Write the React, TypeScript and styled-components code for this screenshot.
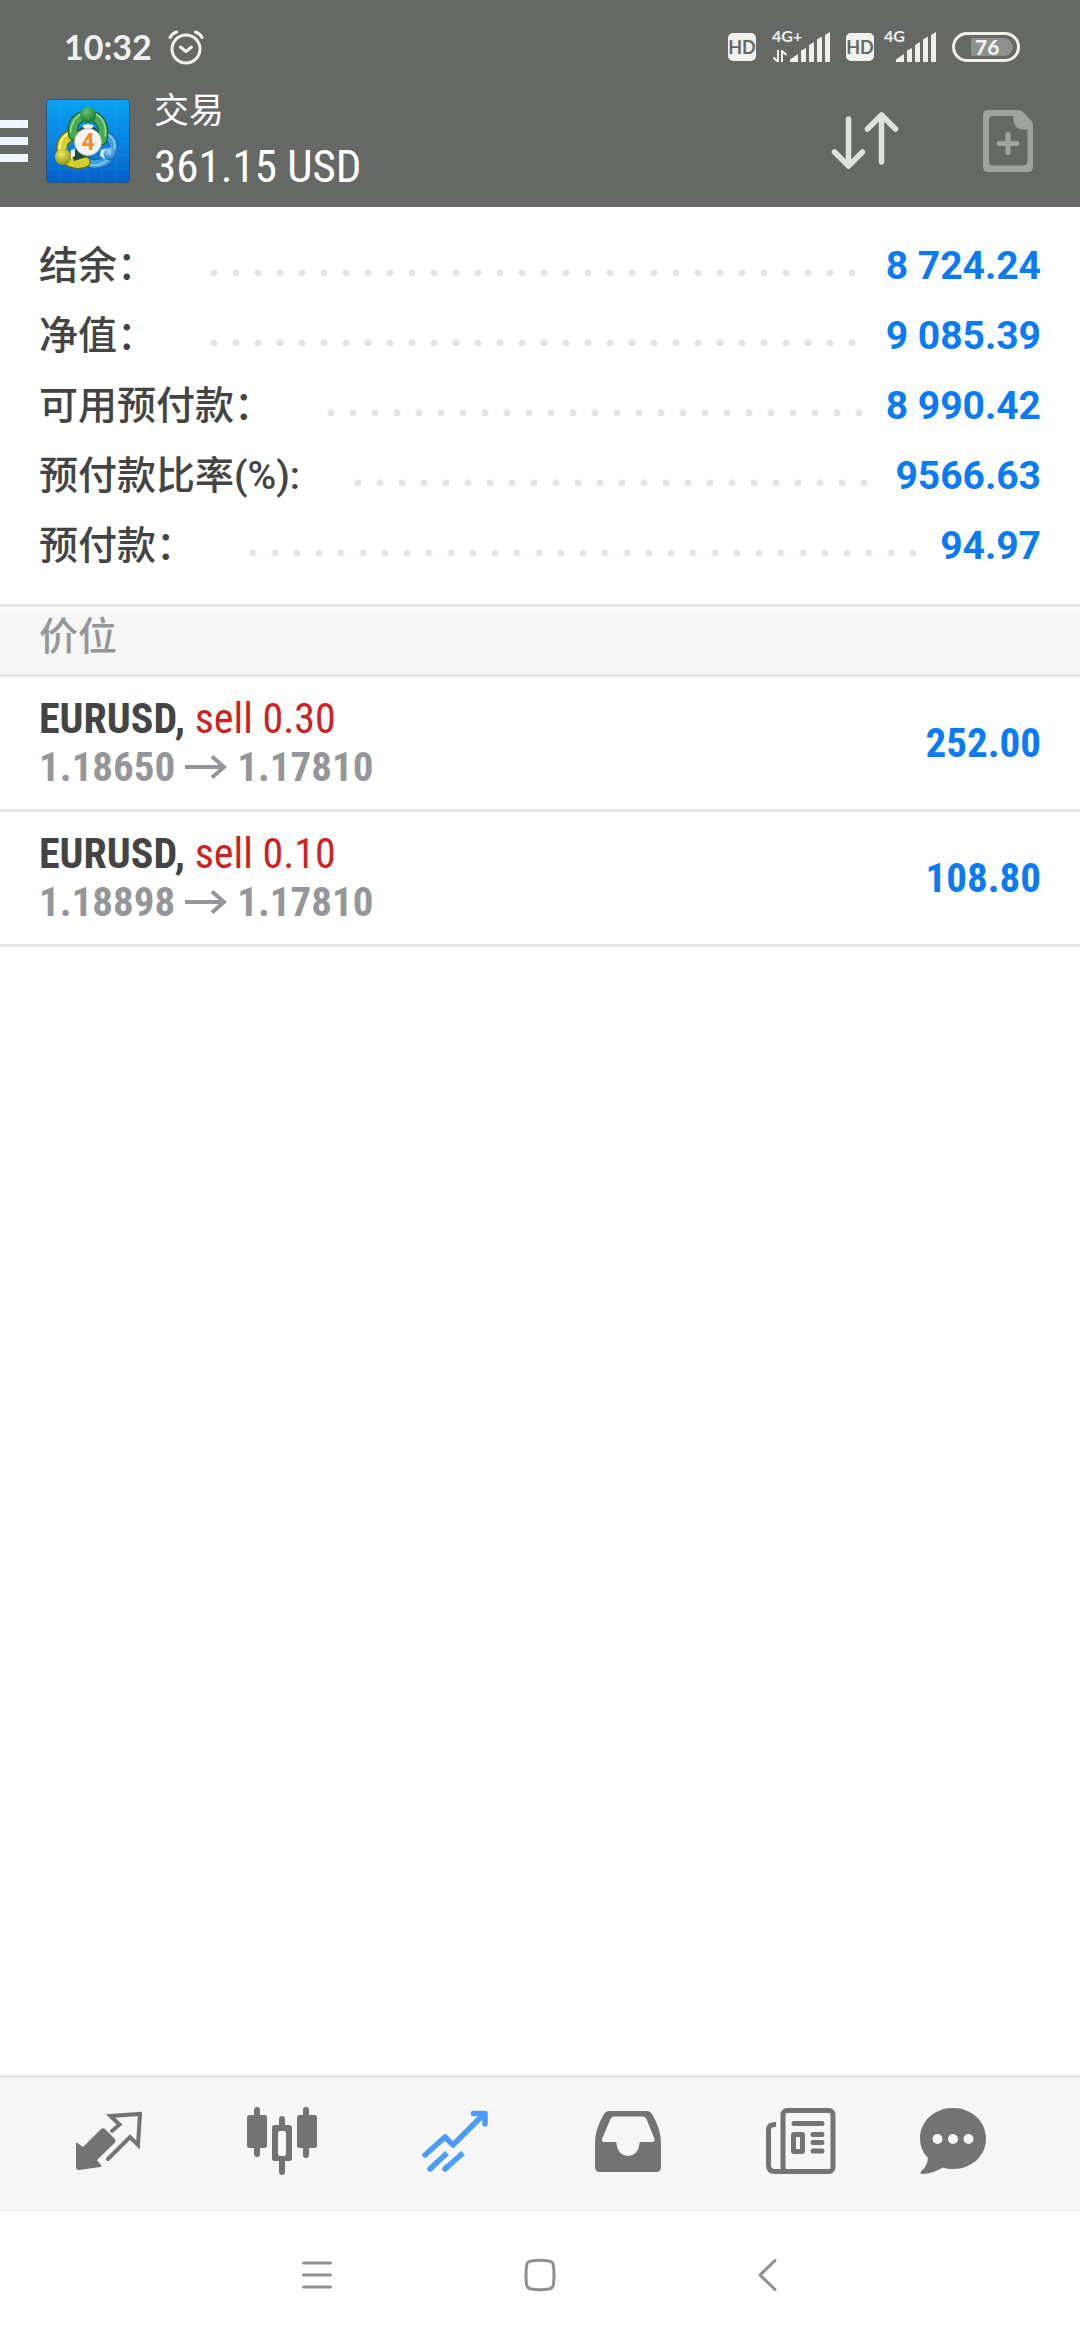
import React from "react";
import styled, { createGlobalStyle } from "styled-components";

const sans = `Roboto, "Noto Sans CJK SC", sans-serif`;
const condensed = `"Roboto Condensed", "Liberation Sans Narrow", Roboto, "Noto Sans CJK SC", sans-serif`;

const color = {
  header: "#666865",
  headerText: "#ffffff",
  status: "#f0f1ef",
  text: "#444444",
  muted: "#959699",
  blue: "#0a7af5",
  red: "#cc2222",
  line: "#e4e4e4",
  panel: "#f6f6f6",
  icon: "#737373",
  active: "#4a9cf8",
  system: "#8f8f8f",
};

const GlobalStyle = createGlobalStyle`
  * { box-sizing: border-box; }
  body { margin: 0; background: #ffffff; font-family: ${sans}; }
  button { border: 0; padding: 0; background: none; font: inherit; color: inherit; cursor: pointer; }
  svg { display: block; }
`;

const Page = styled.div`
  min-height: 100vh;
  display: flex;
  flex-direction: column;
`;

const Header = styled.header`
  background: ${color.header};
  color: ${color.headerText};
`;

const StatusBar = styled.div`
  display: flex;
  align-items: center;
  justify-content: space-between;
  padding: 28px 60px 0 64px;
  color: ${color.status};
`;

const StatusGroup = styled.div<{ $gap: number }>`
  display: flex;
  align-items: center;
  gap: ${(p) => p.$gap}px;
`;

const Clock = styled.time`
  font: 700 34px/38px Lato, sans-serif;
`;

const HdBadge = styled.span`
  width: 28px;
  height: 28px;
  border-radius: 5px;
  background: ${color.status};
  color: ${color.header};
  font: 700 18px/29px Lato, sans-serif;
  text-align: center;
`;

const SignalBox = styled.span<{ $width: number }>`
  position: relative;
  display: flex;
  justify-content: flex-end;
  width: ${(p) => p.$width}px;
`;

const NetworkLabel = styled.span`
  position: absolute;
  top: -4px;
  left: 0;
  font: 700 16px/16px Lato, sans-serif;
`;

const Battery = styled.span`
  display: flex;
  align-items: center;
  width: 68px;
  height: 30px;
  padding: 3px 4px 3px 16px;
  border: 3px solid ${color.status};
  border-radius: 15px;
`;

const BatteryLevel = styled.span`
  flex: 1;
  height: 18px;
  padding-left: 4px;
  border-radius: 2px 9px 9px 2px;
  background: #8e908d;
  font: 900 21px/18px Lato, sans-serif;
`;

const AppBar = styled.div`
  display: flex;
  align-items: center;
  height: 141px;
  padding: 8px 47px 0 0;
`;

const MenuButton = styled.button`
  display: flex;
  flex-direction: column;
  gap: 9px;
  width: 28px;
  margin-right: 18px;
`;

const MenuLine = styled.span`
  height: 8px;
  background: #eef5ff;
`;

const Titles = styled.div`
  flex: 1;
  margin-left: 24px;
  padding-top: 3px;
`;

const Title = styled.h1`
  margin: 0;
  font: 400 35px/44px ${sans};
`;

const Total = styled.p`
  margin: 0;
  padding-top: 5px;
  font: 400 45px/56px ${condensed};
`;

const Actions = styled.div`
  display: flex;
  align-items: center;
  gap: 84px;
`;

const Main = styled.main`
  flex: 1;
`;

const Summary = styled.dl`
  margin: 0;
  padding: 24px 39px 23px;
  border-bottom: 3px solid ${color.line};
`;

const SummaryRow = styled.div`
  display: flex;
  align-items: center;
  height: 70px;
`;

const SummaryLabel = styled.dt`
  color: ${color.text};
  font: 500 39px/58px ${sans};
`;

const Leader = styled.span`
  flex: 1;
  height: 7px;
  margin: 12px 20px 0 54px;
  background: radial-gradient(circle at 4px 4px, ${color.line} 3px, transparent 4px) 0 0 / 22px 7px repeat-x;
`;

const SummaryValue = styled.dd`
  margin: 0;
  color: ${color.blue};
  font: 700 39px/58px ${sans};
`;

const SectionTitle = styled.h2`
  margin: 3px 0 0;
  padding: 0 39px 10px;
  border-bottom: 3px solid ${color.line};
  background: ${color.panel};
  color: ${color.muted};
  font: 500 39px/54px ${sans};
`;

const Positions = styled.ul`
  margin: 0;
  padding: 0;
  list-style: none;
`;

const Position = styled.li`
  display: flex;
  align-items: center;
  justify-content: space-between;
  height: 135px;
  padding: 0 39px;
  border-bottom: 3px solid ${color.line};
  font: 700 41px/48px ${condensed};
`;

const Symbol = styled.div`
  color: ${color.text};
  font-size: 42px;
`;

const Side = styled.span`
  color: ${color.red};
  font-weight: 400;
`;

const Prices = styled.div`
  display: flex;
  align-items: center;
  gap: 10px;
  color: ${color.muted};
`;

const Profit = styled.div`
  color: ${color.blue};
`;

const TabBar = styled.nav`
  display: grid;
  grid-template-columns: repeat(5, 173fr) 132fr;
  height: 136px;
  padding: 0 61px 0 22px;
  border-top: 3px solid ${color.line};
  border-bottom: 1px solid ${color.line};
  background: ${color.panel};
`;

const Tab = styled.button<{ $active?: boolean }>`
  display: flex;
  align-items: center;
  justify-content: center;
  padding-bottom: 6px;
  color: ${(p) => (p.$active ? color.active : color.icon)};
`;

const SystemBar = styled.nav`
  display: flex;
  justify-content: center;
  gap: 190px;
  height: 129px;
  color: ${color.system};
`;

const SystemButton = styled.button`
  width: 34px;
  height: 128px;
`;

const AlarmIcon = () => (
  <svg width="36" height="36" viewBox="0 0 36 36" fill="none" stroke="currentColor" strokeWidth="3" strokeLinecap="round" strokeLinejoin="round">
    <circle cx="18" cy="20" r="14" />
    <path d="M12.5 18 18 22.500 23.500 18" />
    <path d="M2 8.500Q4 4.500 8.500 3M34 8.500Q32 4.500 27.500 3" />
  </svg>
);

const SignalBars = () => (
  <svg width="40" height="30" viewBox="0 0 40 30" fill="currentColor">
    <path d="M0 30V27.500L8 22V30ZM11 18.500 16 16V30H11ZM19 13 24 10V30H19ZM27 7.500 32 4.500V30H27ZM35 3 40 0V30H35Z" />
  </svg>
);

const ArrowsSvg = styled.svg`
  position: absolute;
  left: 1px;
  bottom: 0;
`;

const DataArrows = () => (
  <ArrowsSvg width="14" height="12" viewBox="0 0 14 12" fill="none" stroke="currentColor" strokeWidth="2">
    <path d="M5 0V12L0.500 7.500M9 12V1L13.500 5" />
  </ArrowsSvg>
);

const Signal = ({ label, data }: { label: string; data?: boolean }) => (
  <SignalBox $width={data ? 58 : 52}>
    <NetworkLabel>{label}</NetworkLabel>
    {data && <DataArrows />}
    <SignalBars />
  </SignalBox>
);

const AppLogo = () => (
  <svg width="84" height="84" viewBox="0 0 84 84">
    <defs>
      <linearGradient id="sky" x1="0" y1="0" x2="0" y2="1">
        <stop offset="0" stopColor="#0aa2f2" />
        <stop offset="0.500" stopColor="#0784e2" />
        <stop offset="1" stopColor="#0560c6" />
      </linearGradient>
      <radialGradient id="green" cx="0.400" cy="0.300" r="0.700">
        <stop offset="0" stopColor="#6cc46c" />
        <stop offset="1" stopColor="#137536" />
      </radialGradient>
      <radialGradient id="yellow" cx="0.400" cy="0.300" r="0.700">
        <stop offset="0" stopColor="#eeea5c" />
        <stop offset="1" stopColor="#94960f" />
      </radialGradient>
      <radialGradient id="blue" cx="0.400" cy="0.300" r="0.700">
        <stop offset="0" stopColor="#9adcff" />
        <stop offset="1" stopColor="#0b68bd" />
      </radialGradient>
    </defs>
    <rect x="0.500" y="0.500" width="83" height="83" rx="3" fill="url(#sky)" stroke="#2c5878" />
    <path d="M14 1V83M28 1V83M42 1V83M56 1V83M70 1V83M1 14H83M1 28H83M1 42H83M1 56H83M1 70H83" stroke="#3bb0f5" strokeWidth="1" opacity="0.180" />
    <g fill="none" strokeLinecap="round">
      <path d="M54 36C63 35 69 42 67 51C65 61 55 67 45 64.500C40 62.500 37 60 36 56" stroke="#125e9c" strokeWidth="9.500" />
      <path d="M54 36C63 35 69 42 67 51C65 61 55 67 45 64.500C40 62.500 37 60 36 56" stroke="#3f9fe0" strokeWidth="7.500" />
      <path d="M56 34C65 35 70 42 68 50C66 60 55 68 45 66" stroke="#8fd2f6" strokeWidth="1.500" />
      <path d="M30 36C21 35 15 43 16 52C18 62 29 67 39 63" stroke="#6a6c0b" strokeWidth="11.500" />
      <path d="M30 36C21 35 15 43 16 52C18 62 29 67 39 63" stroke="#d3d030" strokeWidth="9" />
      <path d="M28 33C19 34 13 41 14 50" stroke="#f4f27c" strokeWidth="2" />
      <path d="M27.500 36C25 25 31 16.500 42 16.500C53.500 16.500 60 28 56 41" stroke="#0f552a" strokeWidth="10.500" />
      <path d="M27.500 36C25 25 31 16.500 42 16.500C53.500 16.500 60 28 56 41" stroke="#48aa50" strokeWidth="8.500" />
      <path d="M24.500 33C25 24 30 17 35 15M50 15C57 19 61 28 59 37" stroke="#9bd894" strokeWidth="1.500" />
    </g>
    <path d="M33 31Q42 20 51 31L47 37H36ZM25 53 33 49 40 58 28 62Z" fill="#1d4c3c" />
    <path d="M36 27Q42 23 48 27L44 31H40ZM25 51 29 50V57L24 60Z" fill="#ecf7da" />
    <path d="M55 51 61 49 59 60 54 57Z" fill="#d9f1ff" />
    <circle cx="42" cy="16" r="8" fill="url(#green)" />
    <circle cx="17" cy="58" r="8" fill="url(#yellow)" />
    <circle cx="64" cy="55" r="6.500" fill="url(#blue)" />
    <circle cx="42" cy="43" r="13.500" fill="#f3f3f1" stroke="#b9bfba" strokeWidth="1" />
    <text x="42" y="51" textAnchor="middle" fontFamily="Roboto, sans-serif" fontWeight="700" fontSize="23" fill="#f58a2c">4</text>
  </svg>
);

const SortIcon = () => (
  <svg width="68" height="60" viewBox="0 0 68 60" fill="none" stroke="#e0e2df" strokeWidth="5.500" strokeLinecap="round" strokeLinejoin="round">
    <path d="M17.500 8V55M3.500 41 17.500 55 31.500 41M50.500 51V4M36.500 18 50.500 4 64.500 18" />
  </svg>
);

const NewOrderIcon = () => (
  <svg width="50" height="62" viewBox="0 0 50 62" fill="#a0a29f">
    <path fillRule="evenodd" d="M5 0H36Q38 0 39.500 1.500L48.500 11Q50 12.500 50 15V57Q50 62 45 62H5Q0 62 0 57V5Q0 0 5 0ZM10 6Q6 6 6 10V51Q6 55.500 10 55.500H40Q44.500 55.500 44.500 51V19.500H40Q31 19 30.500 10V6Z" />
    <path d="M25 24.500V42.500M16 33.500H34" stroke="#a0a29f" strokeWidth="5" strokeLinecap="round" />
  </svg>
);

const PriceArrow = () => (
  <svg width="42" height="26" viewBox="0 0 42 26" fill="none" stroke="currentColor" strokeWidth="4">
    <path d="M0 13H39M27 2.500 39 13 27 23.500" />
  </svg>
);

const QuotesIcon = () => (
  <svg width="68" height="60" viewBox="0 0 68 60">
    <path d="M1 33Q1 31 2.500 32L8 36 26 18Q28 16.500 30 18L40 28Q41 30 40 31.500L22 49 26 54Q27 56 25 56L4 59Q1 59 1 56Z" fill="currentColor" />
    <path d="M37 20 44.500 13.500 35.500 5 65 3 63 34 55 26 33 48" fill="none" stroke="currentColor" strokeWidth="4" strokeLinecap="round" />
  </svg>
);

const CandlesIcon = () => (
  <svg width="70" height="68" viewBox="0 0 70 68" fill="currentColor">
    <rect x="7" y="0" width="6" height="50" rx="3" />
    <rect x="0" y="8" width="20" height="33" rx="2.500" />
    <rect x="56" y="0" width="6" height="51" rx="3" />
    <rect x="50" y="8" width="20" height="33" rx="2.500" />
    <rect x="32" y="9" width="6" height="14" rx="3" />
    <rect x="32" y="50" width="6" height="18" rx="3" />
    <path fillRule="evenodd" d="M27.500 18H42.500Q45 18 45 20.500V51.500Q45 54 42.500 54H27.500Q25 54 25 51.500V20.500Q25 18 27.500 18ZM33 24Q31 24 31 26V46Q31 49 33 49H37Q39 49 39 46V26Q39 24 37 24Z" />
  </svg>
);

const TradeIcon = () => (
  <svg width="66" height="62" viewBox="0 0 66 62" fill="none" stroke="currentColor" strokeWidth="5.500" strokeLinejoin="round">
    <path d="M3 45 23 27 31 35 62 4" strokeLinecap="round" />
    <path d="M51.500 3.500H63V14" strokeLinecap="round" />
    <path d="M8 59 25 43M23 59 41 43" />
    <path d="M8 59 10 57M23 59 25 57" strokeLinecap="round" />
  </svg>
);

const InboxIcon = () => (
  <svg width="66" height="61" viewBox="0 0 66 61" fill="currentColor">
    <path fillRule="evenodd" d="M14 0H52Q55 0 57 3Q66 18 66 32V56Q66 61 61 61H5Q0 61 0 56V32Q0 18 9 3Q11 0 14 0ZM19 5.500Q16.500 5.500 15.500 8L7 28Q6.500 31 9 31H21.500V33Q23 44.500 33 45Q43 44.500 44.500 33V31H57Q60 31 59.500 28L51.500 8Q50.500 5.500 48 5.500Z" />
  </svg>
);

const NewsIcon = () => (
  <svg width="70" height="66" viewBox="0 0 70 66" fill="none" stroke="currentColor" strokeWidth="5">
    <rect x="17" y="2.500" width="50" height="61" rx="4" />
    <path d="M10 16.500Q2.500 16 2.500 22V57Q2.500 63.500 9 63.500H20" />
    <path d="M28 15.500H56M47 26.500H56M47 34.500H56M47 43H56" strokeLinecap="round" />
    <rect x="27.500" y="26.500" width="9" height="17" rx="0.500" />
  </svg>
);

const ChatIcon = () => (
  <svg width="66" height="66" viewBox="0 0 66 66" fill="currentColor">
    <path fillRule="evenodd" d="M33 0C52 0 66 13.500 66 30.500C66 47.500 52 61 33 61C29.500 61 26 60.500 23 59.500Q13 65.500 2 66Q0 65.500 1 63.500Q7.500 58 8 50Q0 42 0 30.500C0 13.500 14 0 33 0ZM17.500 26A5 5 0 1 0 17.500 36A5 5 0 1 0 17.500 26ZM33 26A5 5 0 1 0 33 36A5 5 0 1 0 33 26ZM48.500 26A5 5 0 1 0 48.500 36A5 5 0 1 0 48.500 26Z" />
  </svg>
);

const RecentsIcon = () => (
  <svg width="34" height="34" viewBox="0 0 34 34" fill="none" stroke="currentColor" strokeWidth="3" strokeLinecap="round">
    <path d="M4.500 5H31.500M4.500 17H31.500M4.500 29H31.500" />
  </svg>
);

const HomeIcon = () => (
  <svg width="34" height="34" viewBox="0 0 34 34" fill="none" stroke="currentColor" strokeWidth="3">
    <path d="M8 3Q17 1.500 26 3Q30 3.500 30.500 8Q31.500 17 30.500 26Q30 30.500 26 31Q17 32.500 8 31Q4 30.500 3.500 26Q2.500 17 3.500 8Q4 3.500 8 3Z" />
  </svg>
);

const BackIcon = () => (
  <svg width="34" height="34" viewBox="0 0 34 34" fill="none" stroke="currentColor" strokeWidth="3" strokeLinecap="round" strokeLinejoin="round">
    <path d="M28 2.500 13 17 28 31.500" />
  </svg>
);

const summary = [
  { label: "结余：", value: "8 724.24" },
  { label: "净值：", value: "9 085.39" },
  { label: "可用预付款：", value: "8 990.42" },
  { label: "预付款比率(%):", value: "9566.63" },
  { label: "预付款：", value: "94.97" },
];

const positions = [
  { symbol: "EURUSD", side: "sell 0.30", open: "1.18650", current: "1.17810", profit: "252.00" },
  { symbol: "EURUSD", side: "sell 0.10", open: "1.18898", current: "1.17810", profit: "108.80" },
];

const tabs = [
  { name: "行情", Icon: QuotesIcon },
  { name: "图表", Icon: CandlesIcon },
  { name: "交易", Icon: TradeIcon, active: true },
  { name: "历史", Icon: InboxIcon },
  { name: "新闻", Icon: NewsIcon },
  { name: "消息", Icon: ChatIcon },
];

export default function App() {
  return (
    <Page>
      <GlobalStyle />
      <Header>
        <StatusBar>
          <StatusGroup $gap={16}>
            <Clock>10:32</Clock>
            <AlarmIcon />
          </StatusGroup>
          <StatusGroup $gap={16}>
            <StatusGroup $gap={16}>
              <HdBadge>HD</HdBadge>
              <Signal label="4G+" data />
            </StatusGroup>
            <StatusGroup $gap={10}>
              <HdBadge>HD</HdBadge>
              <Signal label="4G" />
            </StatusGroup>
            <Battery>
              <BatteryLevel>76</BatteryLevel>
            </Battery>
          </StatusGroup>
        </StatusBar>
        <AppBar>
          <MenuButton aria-label="菜单">
            <MenuLine />
            <MenuLine />
            <MenuLine />
          </MenuButton>
          <AppLogo />
          <Titles>
            <Title>交易</Title>
            <Total>361.15 USD</Total>
          </Titles>
          <Actions>
            <button aria-label="排序">
              <SortIcon />
            </button>
            <button aria-label="新订单">
              <NewOrderIcon />
            </button>
          </Actions>
        </AppBar>
      </Header>
      <Main>
        <Summary>
          {summary.map((row) => (
            <SummaryRow key={row.label}>
              <SummaryLabel>{row.label}</SummaryLabel>
              <Leader />
              <SummaryValue>{row.value}</SummaryValue>
            </SummaryRow>
          ))}
        </Summary>
        <SectionTitle>价位</SectionTitle>
        <Positions>
          {positions.map((p) => (
            <Position key={p.open}>
              <div>
                <Symbol>
                  {p.symbol}, <Side>{p.side}</Side>
                </Symbol>
                <Prices>
                  <span>{p.open}</span>
                  <PriceArrow />
                  <span>{p.current}</span>
                </Prices>
              </div>
              <Profit>{p.profit}</Profit>
            </Position>
          ))}
        </Positions>
      </Main>
      <TabBar>
        {tabs.map(({ name, Icon, active }) => (
          <Tab key={name} aria-label={name} $active={active}>
            <Icon />
          </Tab>
        ))}
      </TabBar>
      <SystemBar>
        <SystemButton aria-label="最近任务">
          <RecentsIcon />
        </SystemButton>
        <SystemButton aria-label="主页">
          <HomeIcon />
        </SystemButton>
        <SystemButton aria-label="返回">
          <BackIcon />
        </SystemButton>
      </SystemBar>
    </Page>
  );
}
